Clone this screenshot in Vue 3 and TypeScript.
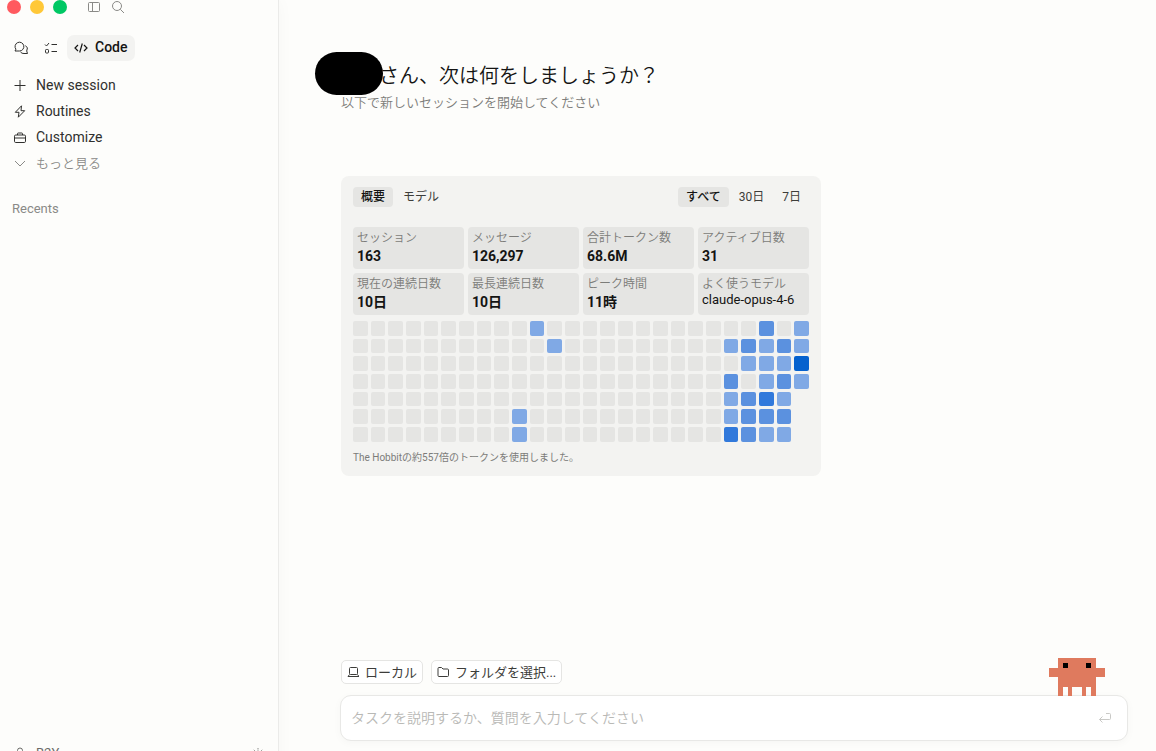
<script setup lang="ts">
import { ref } from 'vue'

interface Stat {
  label: string
  value: string
  plain?: boolean
}

const stats: Stat[] = [
  { label: 'セッション', value: '163' },
  { label: 'メッセージ', value: '126,297' },
  { label: '合計トークン数', value: '68.6M' },
  { label: 'アクティブ日数', value: '31' },
  { label: '現在の連続日数', value: '10日' },
  { label: '最長連続日数', value: '10日' },
  { label: 'ピーク時間', value: '11時' },
  { label: 'よく使うモデル', value: 'claude-opus-4-6', plain: true },
]

// One string per weekday, one character per week: activity level 0-4, "-" for days still to come.
const weekdays: string[] = [
  '00000000001000000000000201',
  '00000000000100000000012121',
  '00000000000000000000001114',
  '00000000000000000000020121',
  '0000000000000000000001231-',
  '0000000001000000000001222-',
  '0000000001000000000003211-',
]

const days: string[] = weekdays.flatMap((row) => row.split(''))
const views: string[] = ['概要', 'モデル']
const ranges: string[] = ['すべて', '30日', '7日']
const view = ref(views[0])
const range = ref(ranges[0])
const task = ref('')
</script>

<template>
  <div class="app">
    <aside class="sidebar">
      <div class="titlebar">
        <span class="light red"></span>
        <span class="light yellow"></span>
        <span class="light green"></span>
        <button class="icon-btn first" aria-label="サイドバー">
          <svg width="14" height="14" viewBox="0 0 14 14"><rect x="1.5" y="2.5" width="11" height="9" rx="1" /><path d="M5.5 2.5v9" /></svg>
        </button>
        <button class="icon-btn" aria-label="検索">
          <svg width="14" height="14" viewBox="0 0 14 14"><circle cx="6" cy="6" r="4.5" /><path d="M9.3 9.3L13 13" /></svg>
        </button>
      </div>

      <div class="modes">
        <button class="mode" aria-label="Chat">
          <svg width="16" height="16" viewBox="0 0 16 16"><path d="M2 11l.9-1.800A4.400 4.400 0 1 1 6.400 11z" /><path d="M12.400 5.500a4 4 0 0 1 1.300 5.500l.8 2.500H11a4 4 0 0 1-3.500-1.500" /></svg>
        </button>
        <button class="mode" aria-label="Tasks">
          <svg width="16" height="16" viewBox="0 0 16 16"><path d="M2 4.500l1.500 1.500L6 3M8.500 4.500H14M8.500 11.500H14" /><rect x="2.500" y="9.500" width="3" height="3.500" rx=".8" /></svg>
        </button>
        <button class="mode active">
          <svg width="14" height="14" viewBox="0 0 14 14" stroke-width="1.2"><path d="M4 4L1 7l3 3M10 4l3 3-3 3M8.300 2.500L5.700 11.500" /></svg>
          <span>Code</span>
        </button>
      </div>

      <nav class="nav">
        <a href="#">
          <svg width="14" height="14" viewBox="0 0 14 14"><path d="M7 2v11M1.500 7.500h11" /></svg>
          New session
        </a>
        <a href="#">
          <svg width="14" height="14" viewBox="0 0 14 14"><path d="M8.500 1.800L2.300 8.300H6L5.300 13.200 11.700 6.700H8z" stroke-linejoin="round" /></svg>
          Routines
        </a>
        <a href="#">
          <svg width="14" height="14" viewBox="0 0 14 14"><rect x="1.500" y="5" width="11" height="7.500" rx="1.200" /><path d="M4.500 5V3.700q0-.7.7-.7h3.600q.7 0 .7.7V5M1.500 8h11" /></svg>
          Customize
        </a>
        <a href="#" class="more">
          <svg width="14" height="14" viewBox="0 0 14 14"><path d="M2 5l5 5 5-5" /></svg>
          <span>もっと見る</span>
        </a>
      </nav>

      <h2 class="recents">Recents</h2>

      <footer class="account">
        <svg width="14" height="14" viewBox="0 0 14 14"><circle cx="7" cy="4.500" r="2.500" /><path d="M2 14q0-4.500 5-4.500t5 4.500" /></svg>
        <span>B2Y</span>
        <button class="icon-btn settings" aria-label="設定">
          <svg width="14" height="14" viewBox="0 0 14 14"><circle cx="7" cy="8" r="3" /><path d="M7 2v1.500M7 12.500V14M1 8h1.500M11.500 8H13M2.800 3.800l1 1M10.200 11.200l1 1M11.200 3.800l-1 1M3.800 11.200l-1 1" /></svg>
        </button>
      </footer>
    </aside>

    <main class="main">
      <header class="greeting">
        <h1><span class="name"></span><span class="title">さん、次は何をしましょうか？</span></h1>
        <p>以下で新しいセッションを開始してください</p>
      </header>

      <section class="panel">
        <div class="tabs">
          <div class="group">
            <button v-for="v in views" :key="v" class="tab" :class="{ on: v === view }" @click="view = v">{{ v }}</button>
          </div>
          <div class="group">
            <button v-for="r in ranges" :key="r" class="tab" :class="{ on: r === range }" @click="range = r">{{ r }}</button>
          </div>
        </div>
        <dl class="stats">
          <div v-for="s in stats" :key="s.label" class="stat">
            <dt>{{ s.label }}</dt>
            <dd :class="{ plain: s.plain }">{{ s.value }}</dd>
          </div>
        </dl>
        <div class="heatmap">
          <span v-for="(d, i) in days" :key="i" class="day" :class="d === '-' ? 'future' : 'level' + d"></span>
        </div>
        <p class="note">The Hobbitの約557倍のトークンを使用しました。</p>
      </section>

      <form class="composer" @submit.prevent>
        <div class="options">
          <button type="button" class="chip">
            <svg width="12" height="14" viewBox="0 0 12 14"><rect x="2.500" y="2.500" width="8" height="7" rx="1" /><path d="M2.500 9.500L1 11.500h11l-1.500-2" /></svg>
            <span>ローカル</span>
          </button>
          <button type="button" class="chip">
            <svg width="12" height="14" viewBox="0 0 12 14"><path d="M1 3.500q0-1 1-1h2.500l1.500 1.500h4.500q1 0 1 1v5.500q0 1-1 1h-8.500q-1 0-1-1z" /></svg>
            <span>フォルダを選択...</span>
          </button>
        </div>
        <div class="field">
          <input v-model="task" type="text" aria-label="タスク" placeholder="タスクを説明するか、質問を入力してください" />
          <button type="submit" class="send" aria-label="送信">
            <svg width="14" height="14" viewBox="0 0 14 14"><path d="M8 2.500h3.500q1 0 1 1v4q0 1-1 1H1.500M4.500 5.500l-3 3 3 3" /></svg>
          </button>
          <svg class="mascot" width="56" height="38" viewBox="0 0 12 8" preserveAspectRatio="none" shape-rendering="crispEdges">
            <path fill="#df7a5e" d="M2 0h8v2h2v2h-2v4h-1v-2h-1v2h-1v-2h-2v2h-1v-2h-1v2h-1v-4h-2v-2h2z" />
            <path fill="#000" d="M3 1h1v1h-1zM8 1h1v1h-1z" />
          </svg>
        </div>
      </form>
    </main>
  </div>
</template>

<style>
body {
  margin: 0;
  background: #fdfdfb;
}
</style>

<style scoped>
.app {
  display: flex;
  height: 100vh;
  overflow: hidden;
  background: #fdfdfb;
  color: #141413;
  font-family: Roboto, 'Noto Sans CJK JP', sans-serif;
  font-size: 14px;
}
h1, h2, p, dl, dd { margin: 0; }
button {
  border: 0;
  padding: 0;
  background: none;
  color: inherit;
  font: inherit;
  cursor: pointer;
}
a { color: inherit; text-decoration: none; }
svg {
  flex: none;
  display: block;
  fill: none;
  stroke: currentColor;
}
.sidebar {
  flex: none;
  box-sizing: border-box;
  width: 279px;
  height: calc(100vh + 16px);
  display: flex;
  flex-direction: column;
  border-right: 1px solid #ebebe9;
  box-shadow: 0 0 16px rgba(0, 0, 0, 0.03);
}
.titlebar {
  display: flex;
  align-items: center;
  gap: 9px;
  height: 14px;
  padding-left: 7px;
}
.light { width: 14px; height: 14px; border-radius: 50%; }
.red { background: #ff5a5f; }
.yellow { background: #ffc838; }
.green { background: #00c864; }
.icon-btn { color: #8a8a87; }
.first { margin: 0 1px 0 11px; }
.modes {
  display: flex;
  align-items: center;
  gap: 14px;
  padding: 21px 13px 0;
}
.mode { display: flex; align-items: center; color: #30302e; }
.mode.active {
  gap: 7px;
  height: 26px;
  margin-left: -6px;
  padding: 0 8px 0 7px;
  border-radius: 7px;
  background: #f3f3f1;
  color: #141413;
  font-weight: 500;
}
.mode span { padding-bottom: 2px; }
.nav { display: flex; flex-direction: column; padding: 11px 13px 0; }
.nav a {
  display: flex;
  align-items: center;
  gap: 9px;
  height: 26px;
  color: #30302e;
}
.nav .more { color: #8a8a87; font-size: 13px; font-weight: 350; }
.nav .more span { padding-bottom: 2px; }
.recents {
  padding: 25px 12px 0;
  color: #8a8a87;
  font-size: 13px;
  font-weight: 400;
  line-height: 16px;
}
.account {
  display: flex;
  align-items: center;
  gap: 9px;
  margin-top: auto;
  padding: 0 13px 6px;
  color: #6b6b68;
  font-size: 13px;
  line-height: 16px;
}
.settings { margin-left: auto; }
.main {
  flex: 1;
  min-width: 0;
  display: flex;
  flex-direction: column;
  padding: 52px 28px 10px 61px;
}
.greeting h1 {
  display: flex;
  align-items: center;
  height: 43px;
  margin-left: -25px;
  font-size: 20px;
  font-weight: 350;
  line-height: 28px;
}
.name {
  width: 68px;
  height: 43px;
  margin-right: -4px;
  border-radius: 22px;
  background: #000;
}
.title { padding-top: 4px; }
.greeting p {
  margin-left: 1px;
  color: #7c7c79;
  font-size: 13px;
  font-weight: 350;
  line-height: 16px;
}
.panel {
  box-sizing: border-box;
  width: 100%;
  max-width: 480px;
  margin: 65px 0 0 1px;
  padding: 11px 12px;
  border-radius: 8px;
  background: #f3f3f1;
}
.tabs { display: flex; justify-content: space-between; }
.group { display: flex; gap: 2px; }
.tab {
  height: 20px;
  padding: 0 8px;
  border-radius: 4px;
  color: #3d3d3a;
  font-size: 12px;
  line-height: 20px;
}
.tab.on { background: #e5e5e3; color: #141413; font-weight: 500; }
.stats {
  display: grid;
  grid-template-columns: repeat(4, 1fr);
  gap: 4px;
  margin-top: 20px;
}
.stat {
  padding: 2px 4px;
  border-radius: 4px;
  background: #e5e5e3;
}
.stat dt { color: #7c7c79; font-size: 12px; font-weight: 350; line-height: 18px; }
.stat dd { padding-bottom: 2px; font-size: 14px; font-weight: 700; line-height: 18px; }
.stat .plain { font-size: 13px; font-weight: 400; line-height: 14px; }
.heatmap {
  display: grid;
  grid-template-columns: repeat(26, 1fr);
  gap: 3px;
  margin-top: 6px;
}
.day { aspect-ratio: 1; border-radius: 2px; }
.level0 { background: #e5e5e3; }
.level1 { background: #80a9e5; }
.level2 { background: #5b91df; }
.level3 { background: #3179db; }
.level4 { background: #0561ce; }
.future { visibility: hidden; }
.note {
  margin-top: 8px;
  color: #7c7c79;
  font-size: 10px;
  line-height: 15px;
}
.composer { margin-top: auto; }
.options { display: flex; gap: 8px; margin-left: 1px; }
.chip {
  display: flex;
  align-items: center;
  gap: 6px;
  height: 24px;
  padding: 0 5px;
  border: 1px solid #e5e5e3;
  border-radius: 5px;
  background: #fff;
  color: #3d3d3a;
  font-size: 13px;
}
.chip span { padding-bottom: 2px; }
.field {
  position: relative;
  box-sizing: border-box;
  display: flex;
  align-items: center;
  height: 46px;
  margin-top: 11px;
  padding: 0 15px 0 10px;
  border: 1px solid #e8e8e6;
  border-radius: 11px;
  background: #fff;
  box-shadow: 0 2px 8px rgba(0, 0, 0, 0.03);
}
.field input {
  flex: 1;
  min-width: 0;
  padding: 0;
  border: 0;
  outline: 0;
  background: none;
  font: inherit;
}
.field input::placeholder { color: #b9b9b6; font-weight: 350; }
.send { color: #c9c9c6; }
.mascot {
  position: absolute;
  right: 22px;
  bottom: 44px;
  stroke: none;
}
</style>
